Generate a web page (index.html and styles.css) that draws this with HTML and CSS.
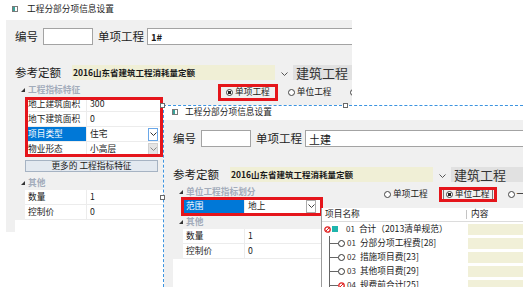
FILE: index.html
```html
<!DOCTYPE html>
<html lang="zh-CN">
<head>
  <meta charset="UTF-8">
  <meta name="viewport" content="width=device-width, initial-scale=1.0">
  <title>工程分部分项信息设置</title>
  <link rel="stylesheet" href="styles.css">
</head>
<body>
  <div class="shot">

    <!-- 单项工程窗口 -->
    <div class="win win-main">
      <div class="win-title">
        <svg class="app-icon" width="6" height="6" viewBox="0 0 6 6"><rect x="0.5" y="0.5" width="5" height="5" fill="#fff" stroke="#7a7a7a"/><rect x="1" y="1" width="2" height="4" fill="#3aa39a"/></svg>
        工程分部分项信息设置
      </div>
      <div class="win-body">
        <div class="form-row">
          <span class="lbl">编号</span>
          <span class="field field-code"></span>
          <span class="lbl">单项工程</span>
          <span class="field field-name">1#</span>
        </div>
        <div class="form-row quota-row">
          <span class="lbl">参考定额</span>
          <span class="quota">2016山东省建筑工程消耗量定额</span>
          <span class="chev"><svg width="7" height="4" viewBox="0 0 7 4"><polyline points="0.5,0.5 3.5,3.5 6.5,0.5" fill="none" stroke="#555"/></svg></span>
          <span class="quota-type">建筑工程</span>
        </div>
        <div class="lower">
          <div class="props">
            <div class="cat"><span class="cat-arrow"></span>工程指标特征</div>
            <div class="rows marked-box">
              <div class="prop"><span class="key">地上建筑面积</span><span class="val">300</span></div>
              <div class="prop"><span class="key">地下建筑面积</span><span class="val">0</span></div>
              <div class="prop"><span class="key sel">项目类型</span><span class="val">住宅<span class="dd"><svg width="7" height="4" viewBox="0 0 7 4"><polyline points="0.5,0.5 3.5,3.5 6.5,0.5" fill="none" stroke="#333"/></svg></span></span></div>
              <div class="prop"><span class="key">物业形态</span><span class="val">小高层<span class="dd off"><svg width="7" height="4" viewBox="0 0 7 4"><polyline points="0.5,0.5 3.5,3.5 6.5,0.5" fill="none" stroke="#888"/></svg></span></span></div>
            </div>
            <div class="more"><span class="more-btn">更多的 工程指标特征</span></div>
            <div class="cat"><span class="cat-arrow"></span>其他</div>
            <div class="rows">
              <div class="prop"><span class="key">数量</span><span class="val">1</span></div>
              <div class="prop"><span class="key">控制价</span><span class="val">0</span></div>
            </div>
            <div class="blank"></div>
          </div>
          <div class="side">
            <div class="radios">
              <span class="radio marked"><span class="dot on"></span>单项工程</span>
              <span class="radio"><span class="dot"></span>单位工程</span>
              <span class="radio"><span class="dot"></span>一般</span>
            </div>
          </div>
        </div>
      </div>
    </div>

    <!-- 单位工程窗口（选中框） -->
    <div class="win win-popup">
      <span class="handle h-tl"></span>
      <span class="handle h-tm"></span>
      <span class="handle h-ml"></span>
      <div class="win-title">
        <svg class="app-icon" width="6" height="6" viewBox="0 0 6 6"><rect x="0.5" y="0.5" width="5" height="5" fill="#fff" stroke="#7a7a7a"/><rect x="1" y="1" width="2" height="4" fill="#3aa39a"/></svg>
        工程分部分项信息设置
      </div>
      <div class="win-body">
        <div class="form-row">
          <span class="lbl">编号</span>
          <span class="field field-code"></span>
          <span class="lbl">单项工程</span>
          <span class="field field-name field-big">土建</span>
        </div>
        <div class="form-row quota-row">
          <span class="lbl">参考定额</span>
          <span class="quota">2016山东省建筑工程消耗量定额</span>
          <span class="chev"><svg width="7" height="4" viewBox="0 0 7 4"><polyline points="0.5,0.5 3.5,3.5 6.5,0.5" fill="none" stroke="#555"/></svg></span>
          <span class="quota-type">建筑工程</span>
        </div>
        <div class="lower">
          <div class="props">
            <div class="cat"><span class="cat-arrow"></span>单位工程指标划分</div>
            <div class="rows">
              <div class="prop marked-row"><span class="key sel">范围</span><span class="val">地上<span class="dd grey"><svg width="7" height="4" viewBox="0 0 7 4"><polyline points="0.5,0.5 3.5,3.5 6.5,0.5" fill="none" stroke="#444"/></svg></span></span></div>
            </div>
            <div class="cat"><span class="cat-arrow"></span>其他</div>
            <div class="rows">
              <div class="prop"><span class="key">数量</span><span class="val">1</span></div>
              <div class="prop"><span class="key">控制价</span><span class="val">0</span></div>
            </div>
            <div class="blank"></div>
          </div>
          <div class="side">
            <div class="radios">
              <span class="radio"><span class="dot"></span>单项工程</span>
              <span class="radio marked focus"><span class="ring"><span class="dot on"></span>单位工程</span></span>
              <span class="radio"><span class="dot"></span>一般</span>
            </div>
            <div class="tree">
              <div class="tree-head">
                <span class="th-name">项目名称</span>
                <span class="th-content">内容</span>
              </div>
              <div class="tree-row">
                <span class="tn">
                  <svg class="ico" width="7" height="7" viewBox="0 0 7 7"><circle cx="3.5" cy="3.5" r="2.7" fill="#fff" stroke="#e02020" stroke-width="1.3"/><path d="M1.6 5.4 L5.4 1.6" stroke="#e02020"/></svg>
                  <span class="sq"></span>
                  <span class="code">01</span>合计（2013清单规范）
                </span>
                <span class="tc"></span>
              </div>
              <div class="tree-row">
                <span class="tn"><span class="branch"></span><span class="node"></span><span class="code">01</span>分部分项工程费[28]</span>
                <span class="tc"></span>
              </div>
              <div class="tree-row">
                <span class="tn"><span class="branch"></span><span class="node"></span><span class="code">02</span>措施项目费[23]</span>
                <span class="tc"></span>
              </div>
              <div class="tree-row">
                <span class="tn"><span class="branch"></span><span class="node"></span><span class="code">03</span>其他项目费[29]</span>
                <span class="tc"></span>
              </div>
              <div class="tree-row">
                <span class="tn"><span class="branch"></span><svg class="ico" width="7" height="7" viewBox="0 0 7 7"><circle cx="3.5" cy="3.5" r="2.7" fill="#fff" stroke="#e02020" stroke-width="1.3"/><path d="M1.6 5.4 L5.4 1.6" stroke="#e02020"/></svg><span class="code">04</span>规费前合计[25]</span>
                <span class="tc"></span>
              </div>
            </div>
          </div>
        </div>
      </div>
    </div>

  </div>
</body>
</html>
```

FILE: styles.css
```css
* {
  box-sizing: border-box;
}

body {
  margin: 0;
  background: #fff;
  font-family: "Noto Sans CJK SC", "DejaVu Sans", sans-serif;
  color: #1a1a1a;
}

.shot {
  position: relative;
  width: 523px;
  height: 287px;
  overflow: hidden;
}

/* window frame */
.win {
  display: flex;
  flex-direction: column;
  background: #fff;
}

.win-main {
  width: 352px;
  height: 232px;
}

.win-title {
  display: flex;
  align-items: center;
  flex: none;
  height: 20px;
  padding: 0 0 2px 12px;
  gap: 9px;
  font-size: 8.7px;
  line-height: 1;
  white-space: nowrap;
}

.win-body {
  display: flex;
  flex-direction: column;
  flex: 1;
  min-height: 0;
  margin-left: 6px;
  padding: 8px 0 0 9px;
  background: #f0f0f0;
  overflow: hidden;
}

.win-popup {
  position: absolute;
  left: 163px;
  top: 105px;
  right: 0;
  bottom: 0;
  border-top: 1px dashed #3c94e0;
  border-left: 1px dashed #3c94e0;
}

.win-popup .win-title {
  height: 14px;
  padding: 0 0 2px 8px;
  gap: 7px;
}

.win-popup .win-body {
  margin-left: 0;
  padding-top: 10px;
}

.handle {
  position: absolute;
  width: 5px;
  height: 5px;
  border: 1px solid #6a6a6a;
  background: #fff;
  z-index: 2;
}

.h-tl { left: -4px; top: -3px; }
.h-tm { left: 179px; top: -3px; }
.h-ml { left: -4px; top: 89px; }

/* form rows */
.form-row {
  display: flex;
  align-items: center;
  flex: none;
  height: 17px;
  white-space: nowrap;
}

.lbl {
  font-size: 11.5px;
  line-height: 1;
  color: #222;
}

.field {
  display: flex;
  align-items: center;
  height: 17px;
  padding-left: 3px;
  background: #fff;
  border: 1px solid #a3a3a3;
  font-size: 9.5px;
  font-weight: bold;
}

.field-code {
  width: 50px;
  margin: 0 5px;
}

.field-name {
  flex: 1;
  margin-left: 3px;
  border-right: none;
}

.field-big {
  font-size: 11px;
  font-weight: normal;
}

.quota-row {
  height: 15px;
  margin-top: 20px;
}

.quota {
  width: 203px;
  height: 15px;
  margin-left: 11px;
  padding-left: 1px;
  background: #f0efd6;
  font-size: 8.5px;
  line-height: 15px;
  font-weight: bold;
}

.chev {
  display: flex;
  justify-content: center;
  align-items: center;
  width: 18px;
  padding-top: 3px;
}

.quota-type {
  flex: 1;
  height: 15px;
  padding-left: 3px;
  background: #e1e1e1;
  font-size: 13px;
  line-height: 15px;
  color: #333;
}

/* property grid */
.lower {
  display: flex;
  flex: 1;
  min-height: 0;
  margin-top: 2px;
}

.props {
  display: flex;
  flex-direction: column;
  flex: none;
  width: 148px;
  background: #f0f0f0;
}

.cat {
  display: flex;
  align-items: center;
  gap: 3px;
  height: 15px;
  padding-left: 6px;
  font-size: 8.7px;
  font-weight: bold;
  color: #a3acbb;
  white-space: nowrap;
}

.cat-arrow {
  width: 0;
  height: 0;
  border-left: 4px solid transparent;
  border-bottom: 4px solid #333;
}

.rows {
  margin-left: 10px;
}

.prop {
  display: flex;
  align-items: center;
  height: 15px;
  background: #fff;
  border-bottom: 1px solid #ececec;
  font-size: 8.7px;
  line-height: 1;
  white-space: nowrap;
}

.key {
  display: flex;
  align-items: center;
  width: 62px;
  height: 100%;
  padding-left: 3px;
  border-right: 1px solid #ececec;
}

.key.sel {
  background: #0078d7;
  color: #fff;
}

.val {
  display: flex;
  align-items: center;
  flex: 1;
  height: 100%;
  padding-left: 3px;
}

.dd {
  display: flex;
  align-items: center;
  justify-content: center;
  width: 10px;
  height: 13px;
  margin-left: auto;
  margin-right: 5px;
  background: #fff;
  border: 1px solid #6aa7e8;
}

.dd.off {
  background: #e4e4e4;
  border-color: #d0d0d0;
}

.dd.grey {
  border-color: #acacac;
}

.more {
  padding: 3px 5px 3px 10px;
}

.more-btn {
  display: block;
  height: 12px;
  background: #e3e9f0;
  border: 1px solid #a6b3c3;
  font-size: 8.7px;
  line-height: 10px;
  text-align: center;
  white-space: nowrap;
}

.blank {
  flex: 1;
  background: #fff;
}

/* red annotation boxes */
.marked-box {
  outline: 3px solid #e5151b;
  outline-offset: -3px;
}

.marked-row {
  outline: 3px solid #e5151b;
  outline-offset: -1px;
}

.marked {
  outline: 3px solid #e5151b;
}

/* radios */
.side {
  display: flex;
  flex-direction: column;
  flex: 1;
  min-width: 0;
}

.radios {
  display: flex;
  gap: 8px;
  padding: 5px 0 0 58px;
}

.radio {
  display: inline-flex;
  align-items: center;
  flex: none;
  gap: 2px;
  height: 11px;
  padding: 0 5px;
  font-size: 8.7px;
  line-height: 1;
  white-space: nowrap;
}

.radio.focus {
  padding: 0 2px;
  outline-offset: -1px;
}

.ring {
  display: inline-flex;
  align-items: center;
  gap: 2px;
  height: 11px;
  padding: 0 2px;
  border: 1px solid #777;
}

.dot {
  width: 7px;
  height: 7px;
  border: 1px solid #444;
  border-radius: 50%;
  background: #fff;
}

.dot.on {
  background: radial-gradient(circle, #222 0 1.5px, #fff 2px);
}

/* tree */
.tree {
  flex: 1;
  margin-top: 8px;
  background: #fff;
  border-left: 1px solid #9c9c9c;
  font-size: 8.7px;
  line-height: 1;
  white-space: nowrap;
}

.tree-head {
  display: flex;
  align-items: center;
  height: 14px;
  border-bottom: 1px solid #dcdcdc;
}

.th-name {
  width: 145px;
  padding-left: 3px;
  border-right: 1px solid #c4c4c4;
}

.th-content {
  padding-left: 4px;
}

.tree-row {
  display: flex;
  align-items: center;
  height: 14px;
}

.tn {
  display: flex;
  align-items: center;
  width: 146px;
  height: 100%;
  padding-left: 2px;
}

.tc {
  flex: 1;
  height: 11px;
  background: #f1f0d8;
}

.sq {
  width: 6px;
  height: 6px;
  margin: 0 6px 0 1px;
  background: #1fb5ad;
}

.branch {
  width: 9px;
  height: 100%;
  margin-left: 5px;
  background:
    linear-gradient(#666, #666) 0 0 / 1px 100% no-repeat,
    linear-gradient(#666, #666) 0 50% / 100% 1px no-repeat;
}

.node {
  width: 7px;
  height: 7px;
  border: 1px solid #333;
  border-radius: 50%;
  background: #fff;
}

.code {
  margin: 0 4px 0 2px;
  font-size: 8px;
  color: #333;
}

.tree-row:first-of-type .code {
  margin-left: 0;
  margin-right: 3px;
}
```
